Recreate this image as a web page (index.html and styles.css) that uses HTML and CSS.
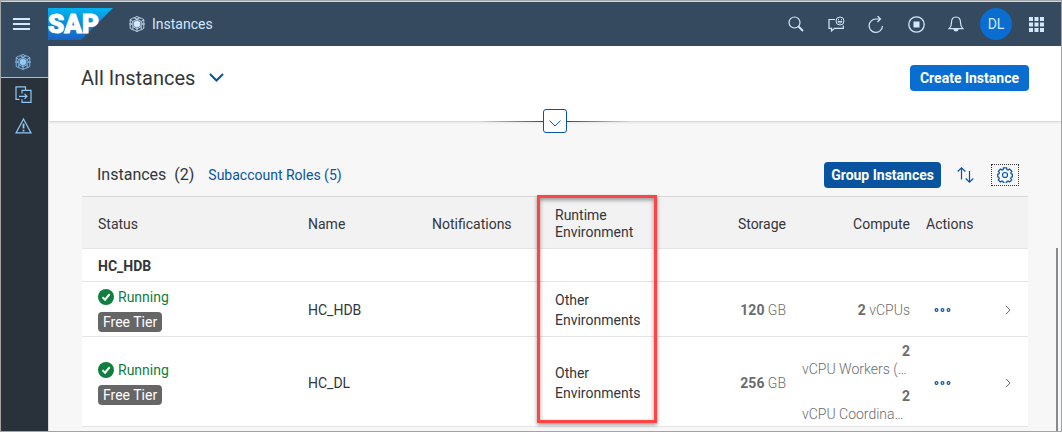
FILE: index.html
```html
<!DOCTYPE html>
<html lang="en">
<head>
<meta charset="utf-8">
<title>Instances</title>
<link rel="stylesheet" href="styles.css">
</head>
<body>
<svg class="defs" aria-hidden="true">
  <symbol id="cube" viewBox="0 0 16 16">
    <path d="M8 4.200 11.200 6v4L8 11.800 4.800 10V6z" fill="currentColor"/>
    <path d="M5.300 1.800 8 .5l2.700 1.300L12.500 2.300l2.300 1.300v3L15.300 8l-.5 1.400v3l-2.300 1.300-1.800.5L8 15.500l-2.700-1.300-1.800-.5-2.300-1.300v-3L.7 8l.5-1.400v-3l2.300-1.300zM5.300 1.800 8 3.200l2.700-1.400M8 3.200 3.800 5.500v5L8 12.800l4.200-2.300v-5zM1.200 3.800l2.600 1.700M14.800 3.800l-2.600 1.700M1.200 7 3 8l-1.800 1M14.800 7 13 8l1.800 1M3.800 10.500v3M12.200 10.500v3M8 12.800v2.700" fill="none" stroke="currentColor" stroke-width=".9"/>
  </symbol>
  <symbol id="more" viewBox="0 0 16 6">
    <g fill="none" stroke="currentColor" stroke-width="1.200"><circle cx="2" cy="3" r="1.400"/><circle cx="8" cy="3" r="1.400"/><circle cx="14" cy="3" r="1.400"/></g>
  </symbol>
  <symbol id="next" viewBox="0 0 6 10">
    <path d="M1 .8 5 5 1 9.200" fill="none" stroke="currentColor"/>
  </symbol>
  <symbol id="ok" viewBox="0 0 16 16">
    <circle cx="8" cy="8" r="8" fill="currentColor"/><path d="m4.500 8.300 2.600 2.400 4.500-5.500" fill="none" stroke="#fff" stroke-width="2"/>
  </symbol>
</svg>
<div class="app">
  <header class="shell">
    <button class="menu" aria-label="Menu"><svg width="17" height="12" viewBox="0 0 17 12"><path d="M0 1h17M0 6h17M0 11h17" stroke="currentColor" stroke-width="2"/></svg></button>
    <svg class="logo" width="65" height="32" viewBox="0 0 65 32" role="img" aria-label="SAP">
      <defs><linearGradient id="sap" x2="0" y2="1"><stop stop-color="#00b4f1"/><stop offset="1" stop-color="#1b61c0"/></linearGradient></defs>
      <path d="M0 0h65L33 32H0z" fill="url(#sap)"/>
      <text class="logo-text" x="0" y="25">SAP</text>
    </svg>
    <svg class="product-icon" width="16" height="16"><use href="#cube"/></svg>
    <span class="product">Instances</span>
    <div class="tools">
      <button aria-label="Search"><svg width="16" height="16" viewBox="0 0 16 16" fill="none" stroke="currentColor"><circle cx="6.500" cy="6.500" r="5.500" stroke-width="1.200"/><path d="m10.500 10.500 4.500 4.500" stroke-width="1.800"/></svg></button>
      <button aria-label="Feedback"><svg width="17" height="16" viewBox="0 0 17 16" fill="none" stroke="currentColor"><path d="M7 3.500H1v8.800h2.500v2.600l3-2.600h8.800V9.500" stroke-width="1.200"/><circle cx="12" cy="5" r="4"/><path d="M10 5.500c.5 2 3.500 2 4 0zM10.500 3.200v1M13.500 3.200v1"/></svg></button>
      <button aria-label="Refresh"><svg width="16" height="17" viewBox="0 0 16 17" fill="none" stroke="currentColor" stroke-width="1.200"><path d="M14.500 10A6.700 6.700 0 1 1 8 3h4.500M9.500 0l3 3-3 3"/></svg></button>
      <button aria-label="Stop"><svg width="17" height="17" viewBox="0 0 17 17"><circle cx="8.500" cy="8.500" r="7.700" fill="none" stroke="currentColor" stroke-width="1.300"/><path d="M5.500 5.500h6v6h-6z" fill="currentColor"/></svg></button>
      <button aria-label="Notifications"><svg width="16" height="16" viewBox="0 0 16 16" fill="none" stroke="currentColor" stroke-width="1.200"><path d="M1.200 12.600c1.800-1.600 2.300-3.200 2.300-6C3.500 3.300 5 1 8 1s4.500 2.300 4.500 5.600c0 2.800.5 4.400 2.300 6z"/><path d="M6 13.200h4c-.2 2.400-3.800 2.400-4 0z" fill="currentColor"/></svg></button>
      <button class="avatar">DL</button>
      <button aria-label="Products"><svg width="15" height="15" viewBox="0 0 15 15" fill="currentColor"><path d="M0 0h4v4H0zM5.500 0h4v4h-4zM11 0h4v4h-4zM0 5.500h4v4H0zM5.500 5.500h4v4h-4zM11 5.500h4v4h-4zM0 11h4v4H0zM5.500 11h4v4h-4zM11 11h4v4h-4z"/></svg></button>
    </div>
  </header>
  <div class="body">
    <nav class="side">
      <a class="active" href="#instances" aria-label="Instances"><svg width="16" height="16"><use href="#cube"/></svg></a>
      <a href="#move" aria-label="Migrations"><svg width="17" height="17" viewBox="0 0 17 17" fill="none" stroke="currentColor" stroke-width="1.200"><path d="M4.500 13.400H1V.8h9.500v3M7 7.500V4.300h9v12H7v-3M4 10.300h8M9.500 7.800l2.500 2.500-2.500 2.500"/></svg></a>
      <a href="#alerts" aria-label="Alerts"><svg width="17" height="16" viewBox="0 0 17 16" fill="none" stroke="currentColor"><path d="M8.500 1 16 14.900H1z" stroke-width="1.200"/><path d="M8.500 5.500v5M8.500 11.700v1.800" stroke-width="1.800"/></svg></a>
    </nav>
    <main class="main">
      <div class="page-head">
        <h1 class="title">All Instances</h1>
        <button class="variant" aria-label="Select view"><svg width="15" height="9" viewBox="0 0 15 9"><path d="m1 1 6.500 6.500L14 1" fill="none" stroke="currentColor" stroke-width="2"/></svg></button>
        <button class="btn create">Create Instance</button>
        <div class="expander"><button aria-label="Expand header"><svg width="12" height="7" viewBox="0 0 12 7"><path d="m.5.7 5.500 5.300L11.500.7" fill="none" stroke="currentColor"/></svg></button></div>
      </div>
      <div class="content">
        <section class="panel">
          <div class="toolbar">
            <h2 class="subtitle">Instances&nbsp; (2)</h2>
            <a class="roles" href="#roles">Subaccount Roles (5)</a>
            <button class="btn group-btn">Group Instances</button>
            <button class="icon-btn" aria-label="Sort"><svg width="17" height="16" viewBox="0 0 17 16" fill="none" stroke="currentColor" stroke-width="1.200"><path d="M4.500 12.500V1M.7 4.500 4.500.9l3.800 3.600M12.500 4v11M8.700 11.500l3.800 3.600 3.800-3.600"/></svg></button>
            <button class="icon-btn focused" aria-label="Settings"><svg width="16" height="16" viewBox="0 0 16 16" fill="none" stroke="currentColor" stroke-width="1.200"><path d="M6.400.8h3.200l.3 1.800 1.200.5 1.600-1 2.100 2.200-1 1.500.5 1.100 1.100.3v2.600l-1.200.4-.5 1.200 1 1.500-2.100 2.100-1.500-1-1.200.5-.3 1.600H6.400l-.3-1.600-1.200-.5-1.600 1-2-2.100 1-1.500-.5-1.200-1.100-.4V7.200l1.200-.3.500-1.100-1-1.500 2-2.200 1.600 1 1.200-.5z"/><circle cx="8" cy="8" r="2.500"/></svg></button>
          </div>
          <div class="table-wrap">
            <table class="grid">
              <colgroup><col><col class="w124"><col class="w123"><col class="w124"><col class="w123"><col class="w124"><col class="w-actions"><col class="w-nav"></colgroup>
              <thead><tr><th>Status</th><th>Name</th><th>Notifications</th><th>Runtime Environment</th><th class="num">Storage</th><th class="num">Compute</th><th>Actions</th><th></th></tr></thead>
              <tbody>
                <tr class="group"><td colspan="8">HC_HDB</td></tr>
                <tr>
                  <td><div class="state"><svg width="16" height="16"><use href="#ok"/></svg>Running</div><span class="tag">Free Tier</span></td>
                  <td>HC_HDB</td><td></td><td class="env">Other Environments</td>
                  <td class="num qty"><b>120</b> GB</td><td class="num qty"><b>2</b> vCPUs</td>
                  <td><button class="more" aria-label="Actions"><svg width="17" height="6"><use href="#more"/></svg></button></td>
                  <td><svg class="next" width="6" height="10"><use href="#next"/></svg></td>
                </tr>
                <tr>
                  <td><div class="state"><svg width="16" height="16"><use href="#ok"/></svg>Running</div><span class="tag">Free Tier</span></td>
                  <td>HC_DL</td><td></td><td class="env">Other Environments</td>
                  <td class="num qty"><b>256</b> GB</td>
                  <td class="qty"><div class="units"><div class="unit"><b>2</b><span>vCPU Workers (…</span></div><div class="unit"><b>2</b><span>vCPU Coordina…</span></div></div></td>
                  <td><button class="more" aria-label="Actions"><svg width="17" height="6"><use href="#more"/></svg></button></td>
                  <td><svg class="next" width="6" height="10"><use href="#next"/></svg></td>
                </tr>
              </tbody>
            </table>
            <div class="callout"></div>
          </div>
        </section>
        <div class="scroll-thumb"></div>
      </div>
    </main>
  </div>
</div>
</body>
</html>
```
FILE: styles.css
```css
* { box-sizing: border-box; }
body { margin: 0; font: 14px/18px Roboto, "Liberation Sans", sans-serif; color: #32363a; }
button { font: inherit; border: 0; padding: 0; background: none; color: inherit; display: flex; align-items: center; justify-content: center; }
a { text-decoration: none; }
svg { display: block; flex: none; }
.defs { position: absolute; width: 0; height: 0; }
.app { min-height: 100vh; border: 1px solid #a3a3a3; display: flex; flex-direction: column; background: #f7f7f7; }
.shell { height: 45px; padding-right: 9px; border-top: 1px solid #d4d7da; background: #354a5f; color: #d1e8ff; display: flex; align-items: center; }
.menu { width: 40px; height: 32px; margin-right: 7px; }
.logo-text { font: 900 26px Roboto, sans-serif; fill: #fff; stroke: #fff; stroke-width: 1px; }
.product-icon { margin: 0 7px 0 16px; }
.tools { margin-left: auto; display: flex; align-items: center; gap: 8px; }
.tools button { width: 32px; height: 32px; }
.tools .avatar { border-radius: 50%; background: #0a6ed1; }
.body { flex: 1; display: flex; }
.side { width: 48px; background: #29313a; border-right: 1px solid #d9d9d9; color: #91c8f6; }
.side a { height: 32px; display: flex; align-items: center; justify-content: center; color: inherit; padding-right: 3px; }
.side .active { background: #354a5f; border-bottom: 1px solid #91c8f6; }
.main { flex: 1; min-width: 0; display: flex; flex-direction: column; }
.page-head { position: relative; height: 76px; padding: 0 32px 12px 32px; background: #fff; border-bottom: 1px solid #d9d9d9; box-shadow: 0 1px 2px #0001; display: flex; align-items: center; }
.title { margin: 0; font-size: 20px; line-height: 24px; font-weight: 400; }
.variant { margin-left: 14px; color: #0854a0; }
.btn { height: 26px; padding: 0 7px; border-radius: 4px; color: #fff; font-weight: 700; }
.create { margin-left: auto; padding: 0 10px; background: #0a6ed1; }
.expander { position: absolute; left: 0; right: 0; bottom: -12px; height: 24px; display: flex; justify-content: center; align-items: center; }
.expander::before, .expander::after { content: ""; width: 64px; height: 1px; background: linear-gradient(to right, transparent, #0854a0); }
.expander::after { background: linear-gradient(to left, transparent, #0854a0); }
.expander button { width: 24px; height: 24px; padding-top: 5px; border: 1px solid #0854a0; border-radius: 3px; background: #fff; color: #0854a0; }
.content { flex: 1; display: flex; padding: 32px 3px 0 33px; }
.panel { flex: 1; min-width: 0; padding-bottom: 4px; }
.toolbar { height: 43px; padding: 0 9px 0 15px; display: flex; align-items: center; border-bottom: 1px solid #d9d9d9; }
.subtitle { margin: 0 14px 0 0; font-size: 16px; line-height: 20px; font-weight: 400; }
.roles { color: #0854a0; }
.group-btn { margin-left: auto; background: #0854a0; }
.icon-btn { width: 28px; height: 22px; margin-left: 10px; color: #0854a0; }
.focused { margin-left: 12px; outline: 1px dotted #32363a; outline-offset: -1px; }
.table-wrap { position: relative; }
.grid { width: 100%; table-layout: fixed; border-collapse: separate; border-spacing: 0; }
.grid th, .grid td { padding: 5px 8px 3px; border-bottom: 1px solid #e5e5e5; text-align: left; vertical-align: middle; font-weight: 400; }
.grid th { height: 52px; padding-top: 6px; background: #f2f2f2; line-height: 17px; }
.grid td { height: 55px; background: #fff; }
.grid th:first-child, .grid td:first-child { padding-left: 16px; }
.grid .group td { height: 33px; font-weight: 700; }
.grid .num { text-align: right; }
.grid .env { line-height: 20px; }
.w123 { width: 123px; }
.w124 { width: 124px; }
.w-actions { width: 72px; }
.w-nav { width: 38px; }
.state { display: flex; align-items: center; gap: 4px; color: #107e3e; margin-bottom: 6px; }
.tag { display: block; width: max-content; padding: 1px 5px; border-radius: 4px; background: #666; color: #fff; }
.qty { color: #6a6d70; }
.grid .qty { font-weight: 300; }
.qty b { font-weight: 700; }
.units { display: grid; gap: 9px; }
.unit { display: grid; }
.unit b { text-align: right; }
.unit span { overflow: hidden; white-space: nowrap; }
.more { width: 32px; height: 26px; color: #0854a0; }
.next { margin-left: 7px; color: #6a6d70; }
.callout { position: absolute; top: -2px; bottom: 4px; right: 371px; width: 120px; border: 3px solid #ff4444; box-shadow: 0 2px 4px #0006, inset 0 2px 4px #0006; pointer-events: none; }
.scroll-thumb { width: 2px; margin-left: 28px; margin-top: 94px; background: #858b90; }
```
